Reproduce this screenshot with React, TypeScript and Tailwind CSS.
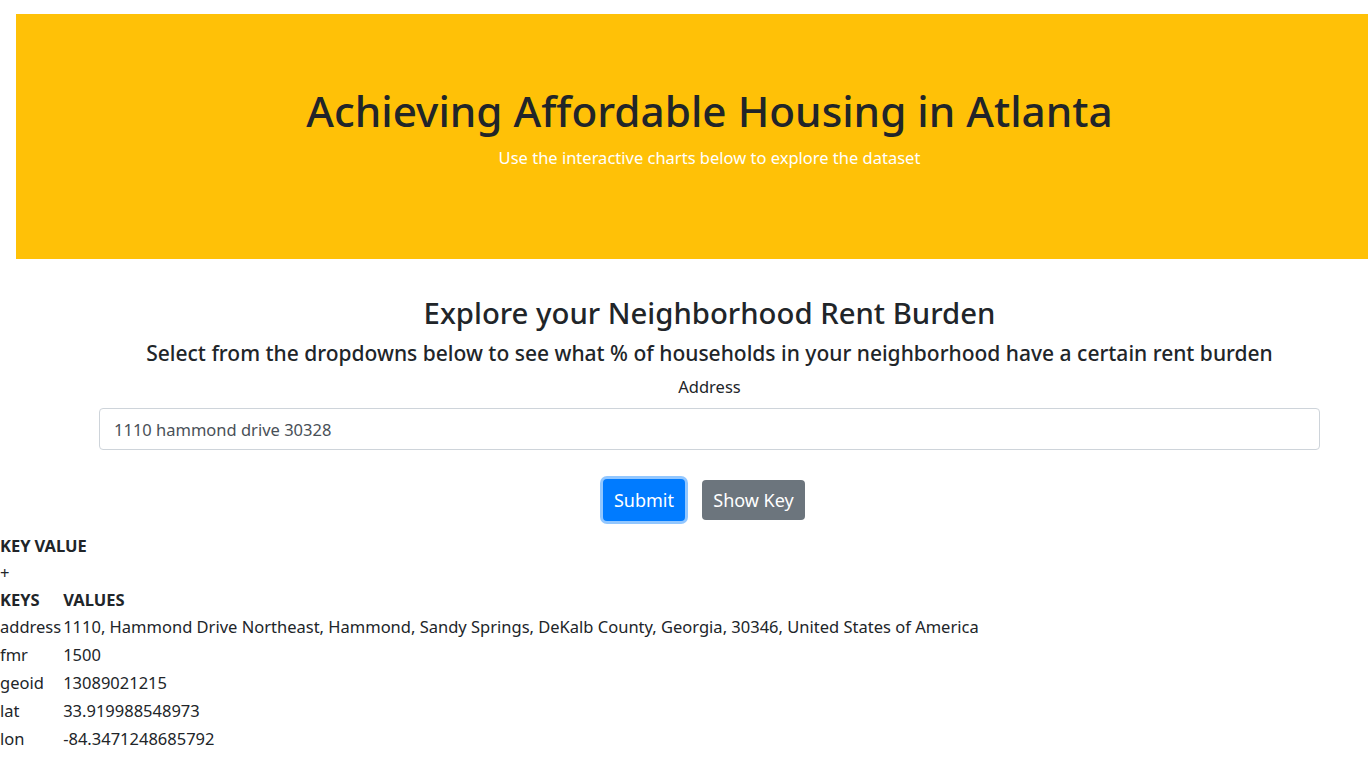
import React from 'react';

const rows = [
  { key: 'address', value: '1110, Hammond Drive Northeast, Hammond, Sandy Springs, DeKalb County, Georgia, 30346, United States of America' },
  { key: 'fmr', value: '1500' },
  { key: 'geoid', value: '13089021215' },
  { key: 'lat', value: '33.919988548973' },
  { key: 'lon', value: '-84.3471248685792' },
];

const App = () => {
  return (
    <div className="min-h-screen w-full overflow-hidden bg-white text-[#212529] font-['Noto_Sans',sans-serif]">
      <div className="w-[1419px]">
        {/* Jumbotron */}
        <div className="mx-4 mt-[14px] h-[245px] bg-[#ffc107] pt-[70px] text-center">
          <h1 className="text-[42.3px] leading-[54px] font-medium">Achieving Affordable Housing in Atlanta</h1>
          <p className="mt-[8px] text-[16.5px] leading-[24px] text-white">Use the interactive charts below to explore the dataset</p>
        </div>

        {/* Rent burden form */}
        <div className="text-center">
          <h2 className="mt-[36px] text-[29.3px] leading-[36px] font-medium">Explore your Neighborhood Rent Burden</h2>
          <h4 className="mt-[8px] text-[21px] leading-[28px] font-medium">
            Select from the dropdowns below to see what % of households in your neighborhood have a certain rent burden
          </h4>
          <label className="mt-[8px] block text-[16.5px] leading-[24px]">Address</label>
          <div className="mx-auto mt-[9px] flex h-[42px] w-[1221px] items-center rounded border border-[#ced4da] px-[14px] pt-[3px] text-left text-[16.5px] text-[#495057]">
            1110 hammond drive 30328
          </div>
          <div className="mt-[29px] flex justify-center gap-[17px] pr-[11px]">
            <button className="h-[42px] w-[82px] rounded bg-[#007bff] text-[18px] text-white shadow-[0_0_0_3px_rgba(38,143,255,0.5)]">
              Submit
            </button>
            <button className="mt-[1px] h-[40px] w-[103px] rounded bg-[#6c757d] text-[18px] text-white">
              Show Key
            </button>
          </div>
        </div>

        {/* Key table */}
        <div className="mt-[12px] text-[16.5px]">
          <div className="flex gap-[4px] font-bold leading-[26px]">
            <span>KEY</span>
            <span>VALUE</span>
          </div>
          <div className="leading-[28px]">+</div>
          <table className="border-collapse">
            <thead>
              <tr className="font-bold leading-[26px]">
                <th className="w-[63px] p-0 pr-[2px] text-left">KEYS</th>
                <th className="p-0 text-left">VALUES</th>
              </tr>
            </thead>
            <tbody>
              {rows.map(r => (
                <tr key={r.key} className="leading-[28px]">
                  <td className="p-0 pr-[2px]">{r.key}</td>
                  <td className="p-0">{r.value}</td>
                </tr>
              ))}
            </tbody>
          </table>
        </div>
      </div>
    </div>
  );
};

export default App;
